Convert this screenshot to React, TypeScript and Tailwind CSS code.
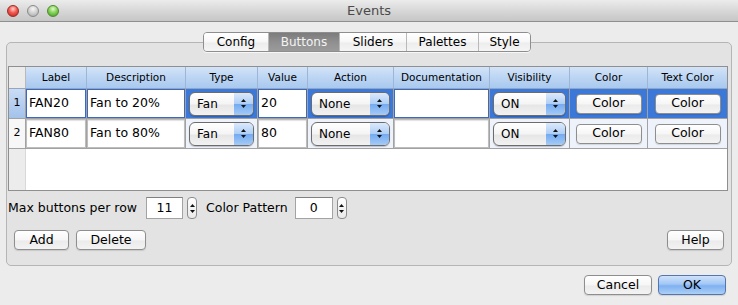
const font = "font-['DejaVu_Sans',sans-serif]";

function Arrows({ size = 5 }: { size?: number }) {
  return (
    <div className="flex flex-col items-center gap-[3px]">
      <svg width={size} height={3} viewBox="0 0 5 3">
        <path d="M2.5 0L5 3H0z" fill="#111" />
      </svg>
      <svg width={size} height={3} viewBox="0 0 5 3">
        <path d="M0 0h5L2.5 3z" fill="#111" />
      </svg>
    </div>
  );
}

function PushButton({ label, w, primary }: { label: string; w: string; primary?: boolean }) {
  return (
    <div
      className={`${w} h-[20px] rounded-[4px] border flex items-center justify-center text-[12.5px] text-black shadow-[0_1px_1px_rgba(0,0,0,0.12)] ${
        primary
          ? "border-[#5575ad] bg-[linear-gradient(#cfe2fb,#a2c7f6_45%,#7eb0f1_55%,#acd0f7)]"
          : "border-[#8e8e8e] bg-[linear-gradient(#ffffff,#f6f6f6_50%,#ebebeb_55%,#f3f3f3)]"
      }`}
    >
      {label}
    </div>
  );
}

function Popup({ value }: { value: string }) {
  return (
    <div className="w-full h-[24px] rounded-[6px] border border-[#6c6c6c] flex overflow-hidden shadow-[0_1px_1px_rgba(0,0,0,0.2)] bg-[linear-gradient(#ffffff,#f4f4f4_50%,#e6e6e6_55%,#f2f2f2)]">
      <div className="flex-1 flex items-center pl-[7px] text-[12px] text-black">{value}</div>
      <div className="w-[19px] flex items-center justify-center bg-[linear-gradient(#dbe9fc,#b0cff6_48%,#74abf1_52%,#a6cbf7)]">
        <Arrows />
      </div>
    </div>
  );
}

function Stepper() {
  return (
    <div className="w-[10px] h-[22px] rounded-[4px] border border-[#8c8c8c] flex items-center justify-center bg-[linear-gradient(#ffffff,#e9e9e9)]">
      <Arrows size={5} />
    </div>
  );
}

const cols = ["w-[17px]", "w-[61px]", "w-[99px]", "w-[72px]", "w-[50px]", "w-[86px]", "w-[96px]", "w-[80px]", "w-[78px]", "flex-1"];
const heads = ["", "Label", "Description", "Type", "Value", "Action", "Documentation", "Visibility", "Color", "Text Color"];

function Field({ text, selected }: { text: string; selected: boolean }) {
  return (
    <div
      className={`w-full h-full bg-white border flex items-center pl-[2px] text-[12.5px] text-black ${
        selected ? "border-[#3a69bf]" : "border-[#bdbdbd] shadow-[inset_0_1px_1px_rgba(0,0,0,0.12)]"
      }`}
    >
      {text}
    </div>
  );
}

function Row({ n, label, desc, value, selected }: { n: number; label: string; desc: string; value: string; selected: boolean }) {
  const bg = selected ? "bg-[#3b78d7]" : "bg-[#eef3fb]";
  const cell = "border-r border-[#a2a2a2] h-full shrink-0";
  return (
    <div className="flex h-[30px] border-b border-[#a2a2a2]">
      <div
        className={`${cols[0]} ${cell} flex items-center justify-center text-[11px] ${
          selected ? "bg-[linear-gradient(#cadcf5,#a3c2eb)]" : "bg-[#f7f7f7]"
        }`}
      >
        {n}
      </div>
      <div className={`${cols[1]} ${cell} ${bg}`}>
        <Field text={label} selected={selected} />
      </div>
      <div className={`${cols[2]} ${cell} ${bg}`}>
        <Field text={desc} selected={selected} />
      </div>
      <div className={`${cols[3]} ${cell} ${bg} flex items-center pl-[3px] pr-[3px]`}>
        <Popup value="Fan" />
      </div>
      <div className={`${cols[4]} ${cell} ${bg}`}>
        <Field text={value} selected={selected} />
      </div>
      <div className={`${cols[5]} ${cell} ${bg} flex items-center px-[3px]`}>
        <Popup value="None" />
      </div>
      <div className={`${cols[6]} ${cell} ${bg}`}>
        <Field text="" selected={selected} />
      </div>
      <div className={`${cols[7]} ${cell} ${bg} flex items-center px-[3px]`}>
        <Popup value="ON" />
      </div>
      <div className={`${cols[8]} ${cell} ${bg} flex items-center justify-center`}>
        <PushButton label="Color" w="w-[66px]" />
      </div>
      <div className={`flex-1 h-full ${bg} flex items-center justify-center`}>
        <PushButton label="Color" w="w-[66px]" />
      </div>
    </div>
  );
}

export default function App() {
  const tabs = [
    { t: "Config", w: "w-[64px]" },
    { t: "Buttons", w: "w-[71px]" },
    { t: "Sliders", w: "w-[67px]" },
    { t: "Palettes", w: "w-[72px]" },
    { t: "Style", w: "w-[52px]" },
  ];
  return (
    <div className={`${font} w-[738px] h-[305px] bg-[#ececec] overflow-hidden`}>
      <div className="h-[22px] grid grid-cols-[1fr_auto_1fr] items-center border-b border-[#8f8f8f] bg-[linear-gradient(#ececec,#d8d8d8_50%,#c6c6c6)]">
        <div className="flex items-center gap-[8px] pl-[7px] pt-[1px]">
          <div className="w-[12px] h-[12px] rounded-full border border-[#9b2b26] bg-[radial-gradient(circle_at_50%_30%,#ffd0cc_0%,#f3594f_45%,#b92119_100%)]" />
          <div className="w-[12px] h-[12px] rounded-full border border-[#8a8a8a] bg-[radial-gradient(circle_at_50%_30%,#f7f7f7_0%,#cfcfcf_50%,#a5a5a5_100%)]" />
          <div className="w-[12px] h-[12px] rounded-full border border-[#4d8a33] bg-[radial-gradient(circle_at_50%_30%,#e0f8cf_0%,#86d455_45%,#3f9622_100%)]" />
        </div>
        <div className="text-[13px] text-[#4a4a4a]">Events</div>
        <div />
      </div>

      <div className="mt-[10px] flex justify-center pr-[4px] relative z-10">
        <div className="flex h-[20px] rounded-[4px] border border-[#8e8e8e] overflow-hidden shadow-[0_1px_0_rgba(255,255,255,0.7)]">
          {tabs.map((tab, i) => (
            <div
              key={tab.t}
              className={`${tab.w} flex items-center justify-center text-[12px] ${i > 0 ? "border-l border-[#b9b9b9]" : ""} ${
                i === 1
                  ? "bg-[linear-gradient(#7c7c7c,#8f8f8f_50%,#9b9b9b)] text-[#f4f4f4] border-[#777]"
                  : "bg-[linear-gradient(#ffffff,#f7f7f7_50%,#ededed_55%,#f5f5f5)] text-black"
              }`}
            >
              {tab.t}
            </div>
          ))}
        </div>
      </div>

      <div className="-mt-[10px] ml-[6px] w-[726px] h-[224px] rounded-[5px] border border-[#b5b5b5] bg-[#e3e3e3] pt-[23px]">
        <div className="ml-[1px] w-[720px] h-[125px] border border-[#8f8f8f] bg-white flex flex-col">
          <div className="flex h-[22px] border-b border-[#94a6bf]">
            {heads.map((h, i) =>
              i === 0 ? (
                <div key={i} className={`${cols[0]} shrink-0 h-full bg-[#ebebeb] border-r border-[#b9b9b9]`} />
              ) : (
                <div
                  key={i}
                  className={`${cols[i]} shrink-0 h-full flex items-center justify-center text-[10.5px] text-black bg-[linear-gradient(#d3e3f7,#bcd5f3_50%,#a9c9ef)] ${
                    i < 9 ? "border-r border-[#9db6d7]" : ""
                  }`}
                >
                  {h}
                </div>
              )
            )}
          </div>
          <Row n={1} label="FAN20" desc="Fan to 20%" value="20" selected />
          <Row n={2} label="FAN80" desc="Fan to 80%" value="80" selected={false} />
          <div className="flex-1 flex">
            <div className="w-[17px] bg-[#ececec] border-r border-[#d9d9d9]" />
            <div className="flex-1 bg-white" />
          </div>
        </div>

        <div className="mt-[6px] flex items-center h-[22px] pl-[1px] text-[12.5px] text-black">
          <span>Max buttons per row</span>
          <div className="ml-[9px] w-[37px] h-[22px] bg-white border border-[#a3a3a3] border-t-[#808080] flex items-center justify-center">11</div>
          <div className="ml-[4px]">
            <Stepper />
          </div>
          <span className="ml-[9px]">Color Pattern</span>
          <div className="ml-[7px] w-[38px] h-[22px] bg-white border border-[#a3a3a3] border-t-[#808080] flex items-center justify-center">0</div>
          <div className="ml-[4px]">
            <Stepper />
          </div>
        </div>

        <div className="mt-[11px] flex justify-between pl-[7px] pr-[7px]">
          <div className="flex gap-[7px]">
            <PushButton label="Add" w="w-[55px]" />
            <PushButton label="Delete" w="w-[70px]" />
          </div>
          <PushButton label="Help" w="w-[57px]" />
        </div>
      </div>

      <div className="mt-[9px] flex justify-end gap-[6px] pr-[12px]">
        <PushButton label="Cancel" w="w-[68px]" />
        <PushButton label="OK" w="w-[68px]" primary />
      </div>
    </div>
  );
}
